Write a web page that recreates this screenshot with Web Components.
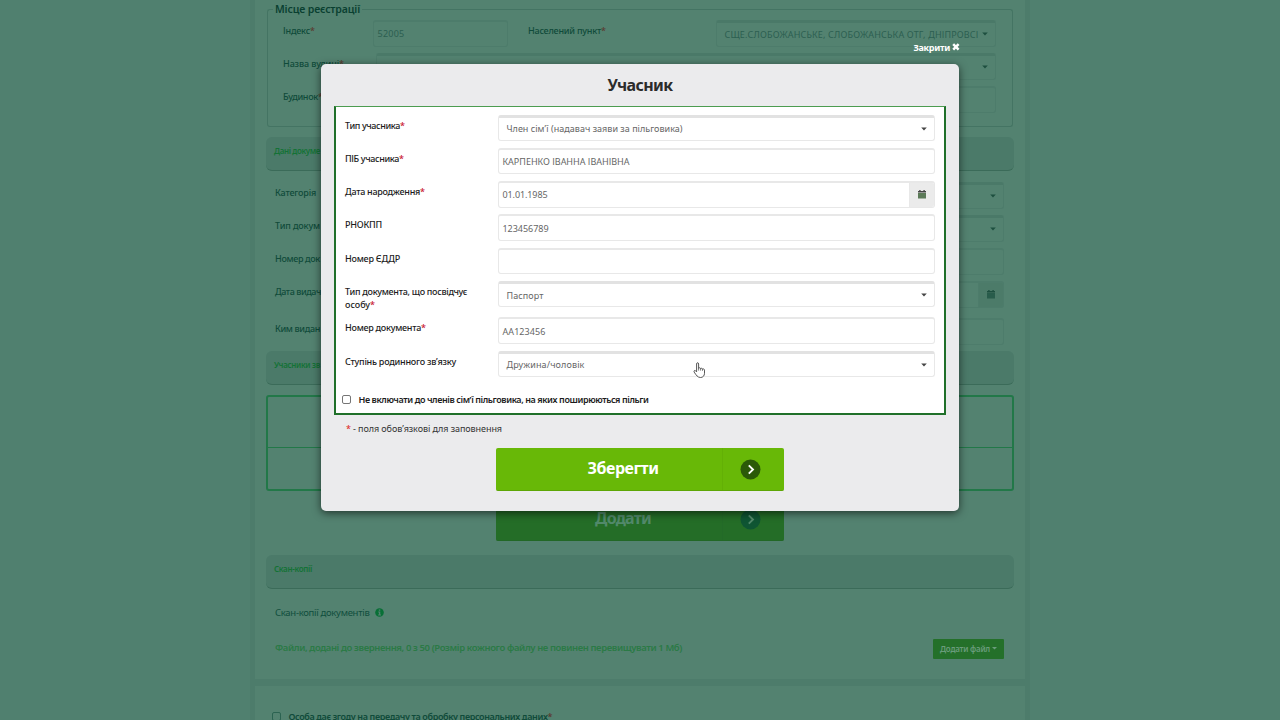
<!DOCTYPE html>
<html lang="uk">
<head>
    <meta charset="UTF-8">
    <meta name="viewport" content="width=device-width, initial-scale=1.0">
    <title>Учасник</title>
    <style>
      * {
        box-sizing: border-box;
      }

      body {
        margin: 0;
        width: 1280px;
        height: 720px;
        overflow: hidden;
        position: relative;
        background: #50806f;
        font-family: "Noto Sans", "Open Sans", sans-serif;
        font-size: 9px;
        line-height: 13px;
      }

      /* colours of the dimmed page behind the dialog */
      page-shell {
        --label: #104b3a;
        --star: #5a3a30;
        --value: #2c5f50;
        --field: #538270;
        --field-line: #4d7c6b;
        --field-top: #4a7968;
        --addon: #4c7b69;
        --caret: #1d4f3f;
        --calendar: #285c4b;
        --button: #246d27;
        --button-line: #226826;
        --button-split: #236a28;
        --button-text: #52896b;
        --circle: #0f5533;
        --check-line: #2b6351;
      }

      modal-dialog {
        --label: #1c1c1c;
        --star: #c8102e;
        --value: #666;
        --field: #fff;
        --field-line: #e8e8e8;
        --field-top: #e2e2e2;
        --addon: #ebebeb;
        --caret: #444;
        --calendar: #5c7a58;
        --button: #68b807;
        --button-line: #5da606;
        --button-split: #63b006;
        --button-text: #fff;
        --circle: #2b5a08;
        --check-line: #767676;
      }
    </style>
</head>
<body>
  <page-shell>
    <page-panel class="main">
      <field-group legend="Місце реєстрації" w="85">
        <div class="line">
          <form-row style="--col:90px;--row:33px;width:225px" label="Індекс" w="27" required>
            <text-box w="27">52005</text-box>
          </form-row>
          <form-row style="--col:188px;--row:33px;width:468px;margin-left:20px" label="Населений пункт" w="73" required>
            <pick-box w="254">СЩЕ.СЛОБОЖАНСЬКЕ, СЛОБОЖАНСЬКА ОТГ, ДНІПРОВСІ</pick-box>
          </form-row>
        </div>
        <form-row style="--col:93px;--row:33px" label="Назва вулиці" w="56" required><pick-box></pick-box></form-row>
        <form-row style="--col:93px;--row:33px" label="Будинок" w="35" required><text-box></text-box></form-row>
      </field-group>
      <section-bar style="margin-top:10px" w="46">Дані докуме</section-bar>
      <div class="rows">
        <form-row label="Категорія" w="41"><pick-box></pick-box></form-row>
        <form-row label="Тип докум" w="45"><pick-box></pick-box></form-row>
        <form-row label="Номер док" w="45"><text-box></text-box></form-row>
        <form-row style="--row:37px" label="Дата видач" w="46"><text-box calendar></text-box></form-row>
        <form-row label="Ким видан" w="45"><text-box></text-box></form-row>
      </div>
      <section-bar w="46">Учасники зв</section-bar>
      <div class="table"><div></div><div></div></div>
      <big-button w="56">Додати</big-button>
      <section-bar style="margin-top:14px" w="38">Скан-копії</section-bar>
      <file-area></file-area>
    </page-panel>
    <page-panel class="consent">
      <check-line w="259" required>Особа дає згоду на передачу та обробку персональних даних</check-line>
    </page-panel>
  </page-shell>

  <modal-dialog heading="Учасник">
    <form-row label="Тип учасника" w="55" required><pick-box w="176">Член сім’ї (надавач заяви за пільговика)</pick-box></form-row>
    <form-row label="ПІБ учасника" w="54" required><text-box w="127">КАРПЕНКО ІВАННА ІВАНІВНА</text-box></form-row>
    <form-row label="Дата народження" w="75" required><text-box w="45" calendar>01.01.1985</text-box></form-row>
    <form-row label="РНОКПП" w="37"><text-box w="46">123456789</text-box></form-row>
    <form-row label="Номер ЄДДР" w="55"><text-box></text-box></form-row>
    <form-row style="--row:36.4px" label="Тип документа, що посвідчує" w="122" label2="особу" w2="25" required><pick-box w="37">Паспорт</pick-box></form-row>
    <form-row label="Номер документа" w="76" required><text-box w="43">АА123456</text-box></form-row>
    <form-row label="Ступінь родинного зв’язку" w="111"><pick-box w="78">Дружина/чоловік</pick-box></form-row>
    <check-line w="290">Не включати до членів сім’ї пільговика, на яких поширюються пільги</check-line>
    <big-button slot="action" w="71">Зберегти</big-button>
  </modal-dialog>

  <hand-cursor></hand-cursor>

  <script>
    // Opens a shadow root and fills it
    function build(el, css, html) {
      const root = el.attachShadow({ mode: 'open' });
      root.innerHTML = `<style>* { box-sizing: border-box; } ${css}</style>${html}`;
      return root;
    }

    function fit(el, text) {
      const w = el.getAttribute('w');
      return w ? `<fit-text w="${w}">${text}</fit-text>` : text;
    }

    class PageShell extends HTMLElement {
      connectedCallback() {
        build(this, `
          :host {
            display: flex;
            flex-direction: column;
            gap: 7px;
            width: 780px;
            height: 720px;
            margin: 0 auto;
            padding: 0 5px;
            background: #4d7c6b;
          }
          ::slotted(.main) { height: 679px; }
          ::slotted(.consent) { flex: 1; }
        `, `<slot></slot>`);
      }
    }

    class PagePanel extends HTMLElement {
      connectedCallback() {
        build(this, `
          :host {
            display: flex;
            flex-direction: column;
            flex: none;
            background: #538270;
            padding: 0 11px;
          }
          :host(.consent) { padding: 23.5px 11px 0 17px; }
          ::slotted(.rows) { padding: 11px 10px 0 9px; height: 180px; --col: 153px; --row: 33px; }
          ::slotted(.table) {
            display: grid;
            grid-template-rows: 52px 1fr;
            height: 96px;
            margin-top: 10px;
            flex: none;
            border: 2px solid #227848;
            border-radius: 3px;
            background: linear-gradient(#227848, #227848) 0 50px / 100% 1px no-repeat;
          }
        `, `<slot></slot>`);
        // the button sits in the middle, its top under the dialog
        const button = this.querySelector('big-button');
        if (button) {
          button.style.margin = '7px auto 0';
        }
      }
    }

    class FieldGroup extends HTMLElement {
      connectedCallback() {
        build(this, `
          :host { display: block; flex: none; height: 127px; padding: 2px 1px 0; }
          .frame {
            display: flex;
            flex-direction: column;
            height: 125px;
          }
          .legend {
            display: flex;
            height: 14px;
            line-height: 14px;
            color: #0a4031;
            font-size: 10.5px;
            font-weight: 600;
          }
          .legend::before, .legend::after {
            content: "";
            border-top: 1px solid #447463;
            margin-top: 7px;
            width: 5px;
          }
          .legend::before { border-left: 1px solid #447463; border-radius: 3px 0 0 0; }
          .legend::after { flex: 1; border-right: 1px solid #447463; border-radius: 0 3px 0 0; }
          fit-text { margin: 0 2px; }
          .body {
            flex: 1;
            padding: 4px 16px 0 15px;
            border: solid #447463;
            border-width: 0 1px 1px;
            border-radius: 0 0 3px 3px;
          }
          ::slotted(.line) { display: flex; }
        `, `<div class="frame">
              <div class="legend">${fit(this, this.getAttribute('legend'))}</div>
              <div class="body"><slot></slot></div>
            </div>`);
      }
    }

    class SectionBar extends HTMLElement {
      connectedCallback() {
        build(this, `
          :host {
            display: block;
            flex: none;
            height: 34px;
            padding: 7px 8px;
            border-radius: 6px;
            background: #4b7a69;
            border-bottom: 1.5px solid #3b6b59;
            color: #147236;
            font-size: 8px;
            font-weight: 600;
          }
        `, fit(this, '<slot></slot>'));
      }
    }

    class FormRow extends HTMLElement {
      connectedCallback() {
        const star = this.hasAttribute('required') ? '<i>*</i>' : '';
        const label2 = this.getAttribute('label2');
        const second = label2
          ? `<div><fit-text w="${this.getAttribute('w2')}">${label2}</fit-text>${star}</div>` : '';
        build(this, `
          :host { display: flex; height: var(--row, 33.3px); }
          .label {
            flex: none;
            width: var(--col, 153px);
            padding-top: 4px;
            color: var(--label);
            font-weight: 500;
            white-space: nowrap;
          }
          .label div { display: flex; }
          i { font-style: normal; color: var(--star); }
          .control { flex: 1; min-width: 0; }
        `, `<div class="label">
              <div>${fit(this, this.getAttribute('label'))}${label2 ? '' : star}</div>${second}
            </div>
            <div class="control"><slot></slot></div>`);
      }
    }

    const FIELD = `
      :host {
        display: flex;
        align-items: center;
        height: 26.5px;
        border: 1px solid var(--field-line);
        border-top: 2px solid var(--field-line);
        border-radius: 3px;
        background: var(--field);
        color: var(--value);
        overflow: hidden;
      }
      .value { flex: 1; min-width: 0; overflow: hidden; white-space: nowrap; }
    `;

    class TextBox extends HTMLElement {
      connectedCallback() {
        const addon = this.hasAttribute('calendar') ? `
          <div class="addon">
            <svg width="8" height="9" viewBox="0 0 8 9">
              <path d="M0 1h1.2V0h1.4v1h2.8V0h1.4v1H8v1.5H0z" fill="var(--caret)"/>
              <path d="M0 3h8v5.5H0z" fill="var(--calendar)"/>
            </svg>
          </div>` : '';
        build(this, `${FIELD}
          .value { padding-left: 3.5px; }
          .addon {
            display: flex;
            align-items: center;
            justify-content: center;
            width: 25px;
            align-self: stretch;
            background: var(--addon);
            border-left: 1px solid var(--field-line);
          }
        `, `<div class="value">${fit(this, '<slot></slot>')}</div>${addon}`);
      }
    }

    class PickBox extends HTMLElement {
      connectedCallback() {
        build(this, `${FIELD}
          :host { border-top: 3px solid var(--field-top); }
          .value { padding: 0 0 0 7.5px; }
          svg { flex: none; margin: 0 7px 0 4px; }
        `, `<div class="value">${fit(this, '<slot></slot>')}</div>
            <svg width="6" height="4" viewBox="0 0 6 4"><path d="M.2 .4h5.6L3 3.400z" fill="var(--caret)"/></svg>`);
      }
    }

    class CheckLine extends HTMLElement {
      connectedCallback() {
        const star = this.hasAttribute('required') ? '<i>*</i>' : '';
        build(this, `
          :host {
            display: flex;
            align-items: center;
            height: 13px;
            color: var(--label);
            font-weight: 600;
            white-space: nowrap;
          }
          .box {
            width: 9px;
            height: 9px;
            margin-right: 7.5px;
            border: 1px solid var(--check-line);
            border-radius: 2px;
            background: var(--field);
          }
          i { font-style: normal; color: var(--star); }
        `, `<span class="box"></span>${fit(this, '<slot></slot>')}${star}`);
      }
    }

    class BigButton extends HTMLElement {
      connectedCallback() {
        build(this, `
          :host {
            display: flex;
            flex: none;
            width: 288px;
            height: 43px;
            border-radius: 2px;
            border-bottom: 1px solid var(--button-line);
            background: var(--button);
            color: var(--button-text);
            font-size: 16px;
            font-weight: 700;
            line-height: 41px;
          }
          .text { width: 227px; padding-left: 28px; text-align: center; border-right: 1px solid var(--button-split); }
          .icon { flex: 1; display: flex; align-items: center; padding: 1px 0 0 17px; }
        `, `<div class="text">${fit(this, '<slot></slot>')}</div>
            <div class="icon">
              <svg width="21" height="21" viewBox="0 0 21 21">
                <circle cx="10.5" cy="10.5" r="10" fill="var(--circle)"/>
                <path d="M8.800 6.300l4.200 4.200-4.200 4.200" fill="none" stroke="var(--button-text)" stroke-width="1.900"/>
              </svg>
            </div>`);
      }
    }

    class FileArea extends HTMLElement {
      connectedCallback() {
        build(this, `
          :host { display: block; padding: 17px 10px 0 9px; }
          .title, .files { display: flex; align-items: center; }
          .title { height: 13px; gap: 5px; color: #104e3d; font-size: 9.5px; }
          .files {
            justify-content: space-between;
            height: 20px;
            margin-top: 19.5px;
            color: #2b7a46;
            font-size: 9.5px;
            font-weight: 600;
          }
          .files > fit-text { margin-bottom: 2px; }
          button {
            display: flex;
            align-items: center;
            justify-content: center;
            gap: 2px;
            width: 71px;
            height: 20px;
            padding: 0;
            border: 0;
            border-radius: 1px;
            background: #24702a;
            color: #6a9c7c;
            font: 600 8px "Noto Sans", sans-serif;
          }
        `, `<div class="title">
              <fit-text w="94.5">Скан-копії документів</fit-text>
              <svg width="9" height="9" viewBox="0 0 9 9">
                <circle cx="4.5" cy="4.5" r="4.300" fill="#087036"/>
                <path d="M3.8 1.4h1.5v1.3H3.8zM3.2 3.4h2.1v3h.7v1H3.1v-1h.8v-2h-.7z" fill="#538270"/>
              </svg>
            </div>
            <div class="files">
              <fit-text w="407">Файли, додані до звернення, 0 з 50 (Розмір кожного файлу не повинен перевищувати 1 Мб)</fit-text>
              <button><fit-text w="50">Додати файл</fit-text><svg width="5" height="3" viewBox="0 0 5 3"><path d="M0 0h5L2.5 2.6z" fill="#6a9c7c"/></svg></button>
            </div>`);
      }
    }

    class ModalDialog extends HTMLElement {
      connectedCallback() {
        build(this, `
          :host {
            position: absolute;
            left: 321px;
            top: 40px;
            width: 638px;
          }
          .close {
            display: flex;
            align-items: center;
            justify-content: flex-end;
            gap: 2px;
            height: 14px;
            margin: 0 -1px 10px 0;
            color: #fff;
            font-weight: 700;
          }
          .window {
            display: flex;
            flex-direction: column;
            height: 447px;
            padding: 0 13px;
            border-radius: 5px;
            background: #ebebed;
            box-shadow: 0 2px 9px rgba(0, 0, 0, .6);
          }
          h1 {
            margin: 0;
            height: 42px;
            line-height: 42px;
            font-size: 16px;
            font-weight: 700;
            color: #2b2b2b;
            text-align: center;
          }
          .fields {
            height: 309px;
            padding: 7.5px 9.5px 0 9px;
            border: 2px solid #20702a;
            border-top: 1px solid #4c9c50;
            background: #fff;
          }
          ::slotted(check-line) { margin: 9px 0 0 -3px; }
          .note { display: flex; gap: 2px; margin: 7px 0 13px 12px; color: #333; }
          .note i { font-style: normal; color: #d22; }
          ::slotted(big-button) { align-self: center; }
        `, `<div class="close">
              <fit-text w="36.5">Закрити</fit-text>
              <svg width="8" height="8" viewBox="0 0 8 8"><path d="M1.2 1.2l5.4 5.4M6.6 1.2L1.2 6.6" stroke="#fff" stroke-width="2.5"/></svg>
            </div>
            <div class="window">
              <h1><fit-text w="65">${this.getAttribute('heading')}</fit-text></h1>
              <div class="fields"><slot></slot></div>
              <div class="note"><i>*</i><fit-text w="149">- поля обов’язкові для заповнення</fit-text></div>
              <slot name="action"></slot>
            </div>`);
      }
    }

    class HandCursor extends HTMLElement {
      connectedCallback() {
        build(this, `
          :host { position: absolute; left: 693px; top: 362px; line-height: 0; }
        `, `<svg width="13" height="17" viewBox="0 0 13 17">
              <path d="M3.6 9.8V2c0-1.7 2-1.7 2 0v4.2c.5-.7 1.8-.5 2 .4.6-.6 1.8-.3 1.9.5.8-.5 2 0 2 1v3.2c0 2.400-1.600 4.200-3.900 4.200-3 0-4.300-2.200-6.400-5.400C.5 8.700 1.800 8 2.600 8.800z" fill="#fff" stroke="#444" stroke-width=".9" stroke-linejoin="round"/>
              <path d="M5.600 6v2.600M7.600 6.600v2M9.500 7.100v1.700" stroke="#444" stroke-width=".7"/>
            </svg>`);
      }
    }

    // Spreads its letters so that the line takes exactly w pixels
    class FitText extends HTMLElement {
      connectedCallback() {
        build(this, `:host { display: inline-block; flex: none; white-space: nowrap; }`, `<slot></slot>`);
        let text = this.textContent;
        const inner = this.querySelector('slot');
        if (inner) {
          text = inner.assignedNodes().map(n => n.textContent).join('');
        }
        const count = text.trim().length;
        if (!count) {
          return;
        }
        const width = this.getBoundingClientRect().width;
        this.style.letterSpacing = `${(this.getAttribute('w') - width) / count}px`;
      }
    }

    customElements.define('page-shell', PageShell);
    customElements.define('page-panel', PagePanel);
    customElements.define('field-group', FieldGroup);
    customElements.define('section-bar', SectionBar);
    customElements.define('form-row', FormRow);
    customElements.define('text-box', TextBox);
    customElements.define('pick-box', PickBox);
    customElements.define('check-line', CheckLine);
    customElements.define('big-button', BigButton);
    customElements.define('file-area', FileArea);
    customElements.define('modal-dialog', ModalDialog);
    customElements.define('hand-cursor', HandCursor);
    // last: it measures text inside the shadow roots above
    customElements.define('fit-text', FitText);
  </script>
</body>
</html>
